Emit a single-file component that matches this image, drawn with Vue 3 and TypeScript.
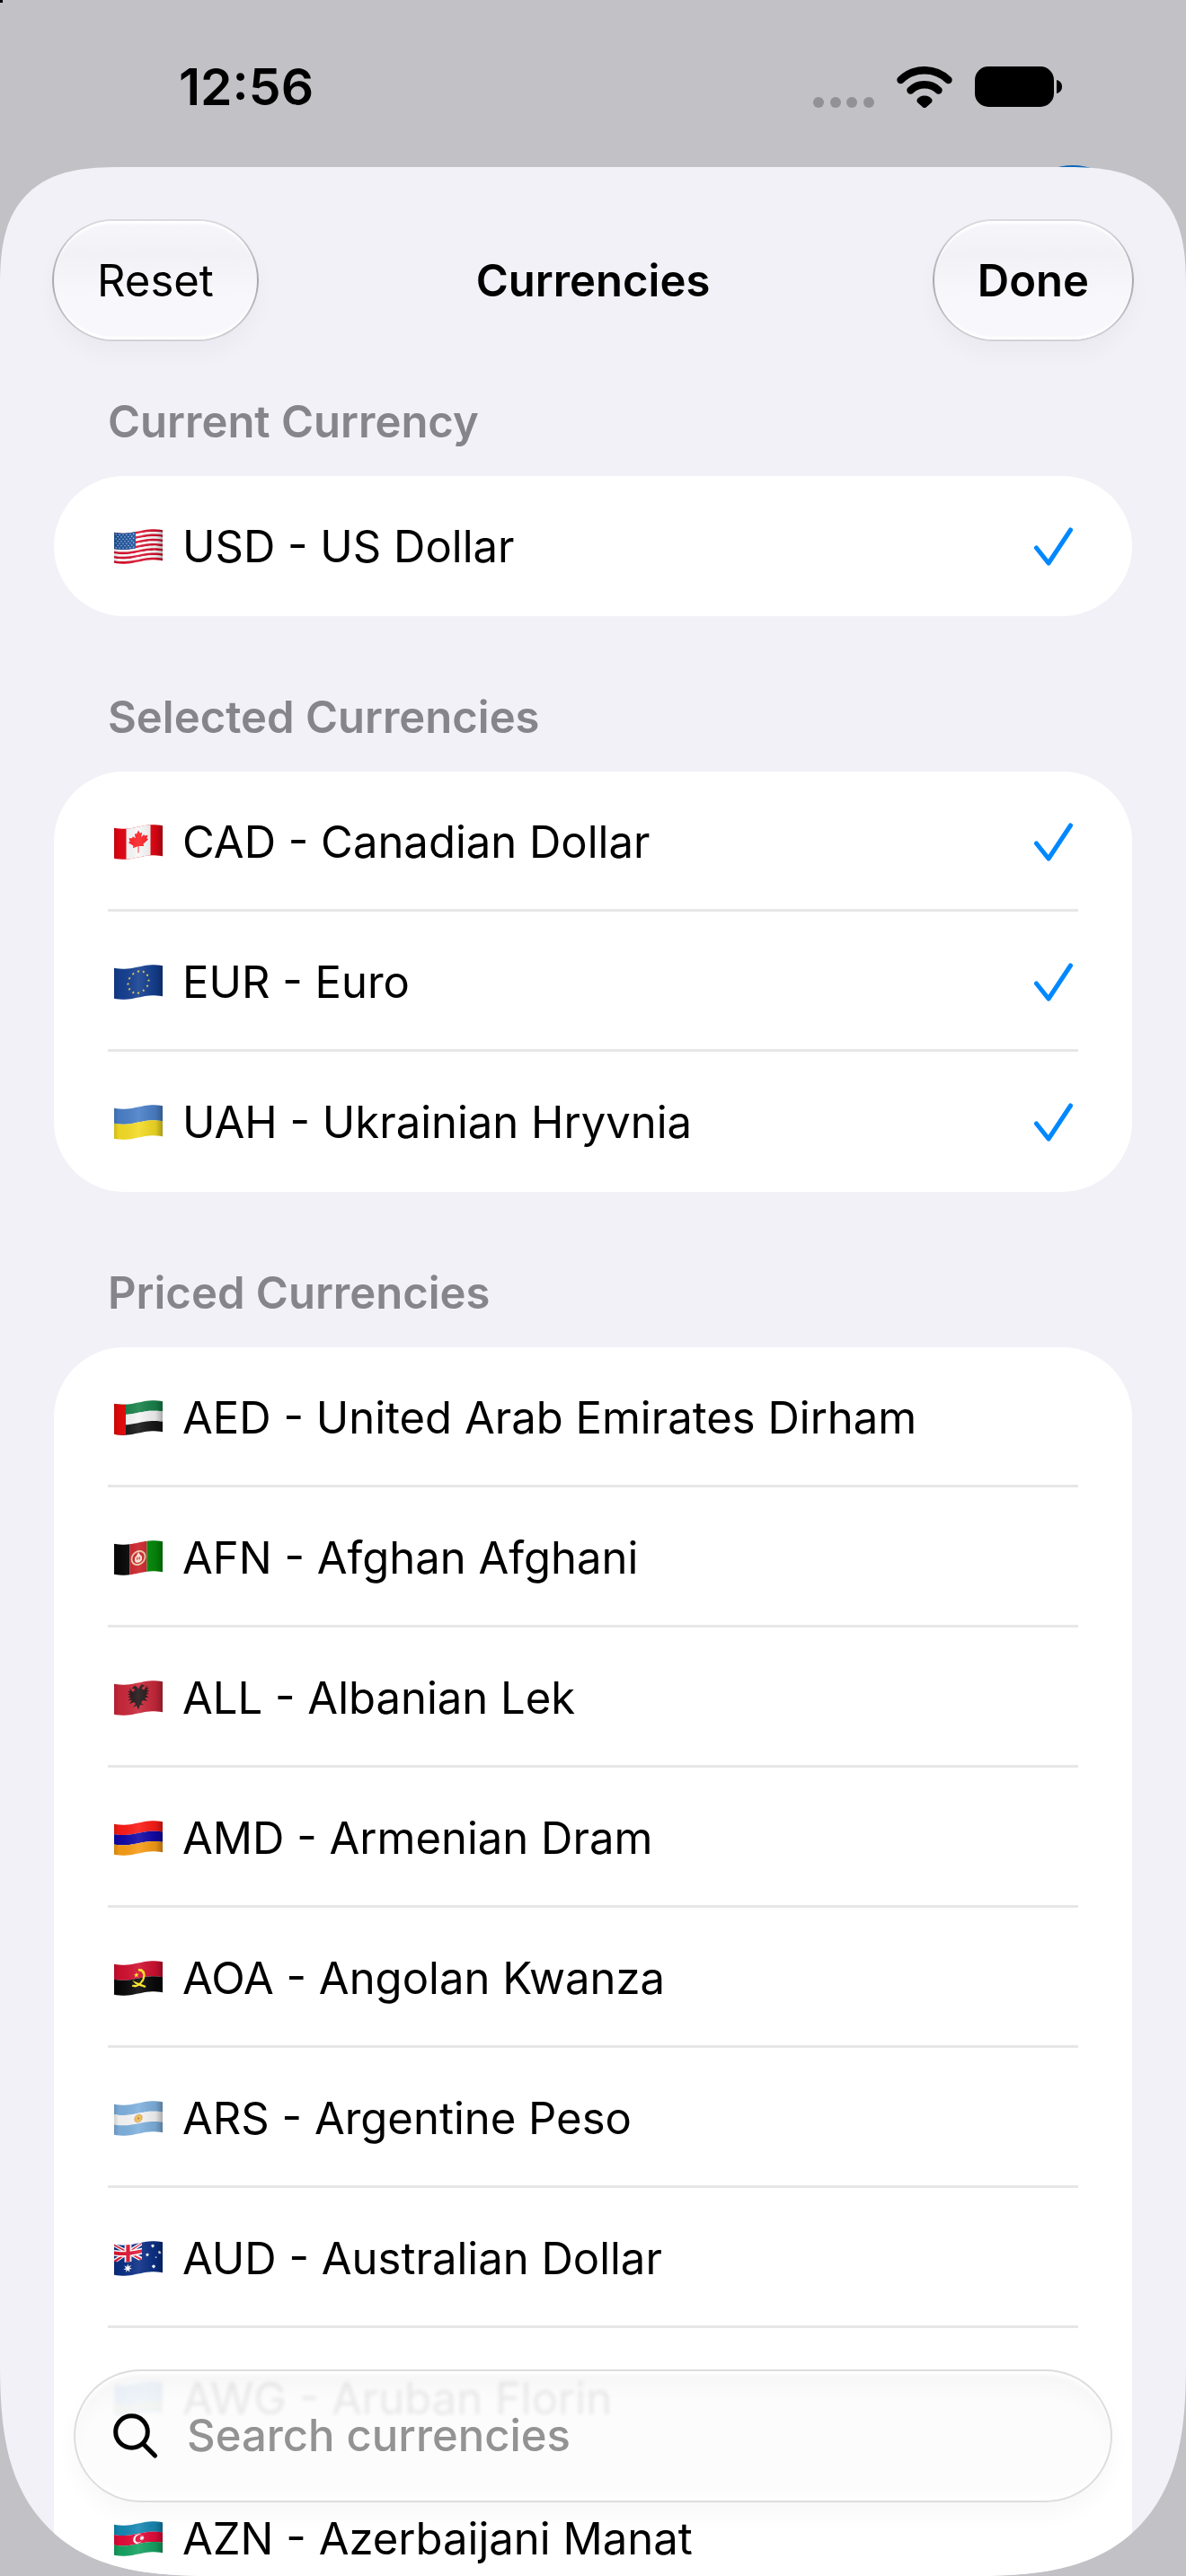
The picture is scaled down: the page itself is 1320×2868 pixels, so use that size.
<script setup lang="ts">
import { ref } from 'vue'

type Point = [number, number]
interface Shape {
  fill: string
  d: string
}
interface Currency {
  code: string
  name: string
  flag: string
  selected?: boolean
}
interface Section {
  title: string
  items: Currency[]
}

/* Flags are drawn flat on a 54 x 34 field, then every point is shifted along this wave. */
const wave = (x: number): number => 2.5 + 2.2 * Math.cos((2 * Math.PI * (x - 10)) / 68)
const poly = (fill: string, pts: Point[]): Shape => ({
  fill,
  d: 'M' + pts.map(([x, y]) => `${x.toFixed(2)} ${(y + wave(x)).toFixed(2)}`).join('L') + 'Z',
})
const rect = (fill: string, x0: number, x1: number, y0: number, y1: number): Shape => {
  const steps = 18
  const top: Point[] = []
  const bottom: Point[] = []
  for (let i = 0; i <= steps; i++) {
    const x = x0 + ((x1 - x0) * i) / steps
    top.push([x, y0])
    bottom.unshift([x, y1])
  }
  return poly(fill, [...top, ...bottom])
}
const disc = (fill: string, cx: number, cy: number, r: number): Shape => {
  const pts: Point[] = []
  for (let i = 0; i < 20; i++) {
    const a = (i * Math.PI) / 10
    pts.push([cx + r * Math.cos(a), cy + r * Math.sin(a)])
  }
  return poly(fill, pts)
}
const star = (fill: string, cx: number, cy: number, r: number, n = 5, inner = 0.42): Shape => {
  const pts: Point[] = []
  for (let i = 0; i < n * 2; i++) {
    const a = (i * Math.PI) / n - Math.PI / 2
    const q = i % 2 ? r * inner : r
    pts.push([cx + q * Math.cos(a), cy + q * Math.sin(a)])
  }
  return poly(fill, pts)
}
const bands = (...fills: string[]): Shape[] =>
  fills.map((f, i) => rect(f, 0, 54, (34 * i) / fills.length, (34 * (i + 1)) / fills.length))
const mirror = (half: Point[], axis: number): Point[] => [
  ...half,
  ...half.slice().reverse().map(([x, y]): Point => [2 * axis - x, y]),
]

const usStars: Shape[] = []
for (let r = 0; r < 7; r++) {
  for (let c = 0; c < 6 - (r % 2); c++) {
    usStars.push(disc('#dfe6f2', 2.2 + c * 3.9 + (r % 2) * 1.95, 1.8 + r * 2.45, 0.62))
  }
}

const flags: Record<string, Shape[]> = {
  us: [
    ...bands(...Array.from({ length: 13 }, (_, i) => (i % 2 ? '#ffffff' : '#d8122f'))),
    rect('#2257a0', 0, 24, 0, 18.3),
    ...usStars,
  ],
  ca: [
    rect('#e30613', 0, 54, 0, 34),
    rect('#f7f7f7', 13.5, 40.5, 0, 34),
    poly('#fb2125', mirror([
      [27, 4], [25, 7.6], [22.8, 6.8], [23.8, 12.2], [20.8, 9.6], [20, 11.4], [16.5, 11],
      [17.6, 14.6], [16, 15.8], [21.6, 20.2], [20.8, 22.6], [26.5, 21.6], [26.5, 29],
    ], 27)),
  ],
  eu: [
    rect('#143f91', 0, 54, 0, 34),
    ...Array.from({ length: 12 }, (_, i) => {
      const a = (i * Math.PI) / 6
      return star('#f5d94a', 27 + 11.5 * Math.sin(a), 17 - 12 * Math.cos(a), 1.7)
    }),
  ],
  ua: bands('#4a80c8', '#f4dc25'),
  ae: [...bands('#18824a', '#f5f5f5', '#161616'), rect('#e60a0a', 0, 13, 0, 34)],
  af: [
    rect('#090909', 0, 17.5, 0, 34),
    rect('#c92027', 17.5, 36.5, 0, 34),
    rect('#058a09', 36.5, 54, 0, 34),
    disc('#efc9a5', 27, 17, 8.4),
    disc('#c92027', 27, 17, 6.6),
    poly('#f6e3d2', [[23, 20], [23, 16], [25, 14], [27, 10.5], [29, 14], [31, 16], [31, 20], [29, 22], [25, 22]]),
    rect('#c92027', 25.2, 28.8, 16, 19),
    rect('#f6e3d2', 26.4, 27.6, 15, 20),
  ],
  al: [
    rect('#c9283a', 0, 54, 0, 34),
    poly('#221517', mirror([
      [27, 7], [25.5, 4.5], [23, 2.5], [19.5, 5], [22.5, 5.5], [23, 8], [20.5, 9], [17, 4],
      [18, 8], [15, 7], [18, 10.5], [14.7, 10.5], [18.3, 13], [15, 14], [19, 15.3],
      [15.5, 17.8], [20, 18], [17, 22], [22, 20.5], [24, 23], [21, 26], [25, 25], [27, 30],
    ], 27)),
  ],
  am: bands('#fb1b16', '#1208a8', '#f79c16'),
  ao: [
    ...bands('#d01030', '#090909'),
    star('#ffe61e', 24.8, 13, 3),
    poly('#ffe61e', [
      [27, 6.5], [31, 7.6], [34, 11], [34.7, 16], [33, 21], [29, 25], [24, 26.5], [19.8, 25],
      [20.6, 23], [25, 24], [29, 22], [31.6, 18.5], [32.3, 14], [30.5, 10.4], [27, 8.8],
    ]),
    poly('#ffe61e', [[20, 18], [25, 21], [35.5, 27], [34.5, 29], [28, 25.4], [24, 22.8]]),
  ],
  ar: [
    ...bands('#7fb1de', '#f7f7f7', '#7fb1de'),
    star('#d9a55f', 27, 17, 5.4, 16, 0.75),
    disc('#f0bd4c', 27, 17, 3.4),
    disc('#b7793d', 27, 17, 1.2),
  ],
  au: [
    rect('#0b2f86', 0, 54, 0, 34),
    poly('#ffffff', [[0, 0], [3.5, 0], [31, 16], [31, 19], [27.5, 19], [0, 3]]),
    poly('#ffffff', [[31, 0], [27.5, 0], [0, 16], [0, 19], [3.5, 19], [31, 3]]),
    poly('#e31837', [[0, 0], [31, 18], [31, 19], [29, 19], [0, 1.4]]),
    poly('#e31837', [[31, 0], [0, 18], [0, 19], [2, 19], [31, 1.4]]),
    rect('#ffffff', 11.6, 19.4, 0, 19),
    rect('#ffffff', 0, 31, 6, 13),
    rect('#e31837', 13.4, 17.6, 0, 19),
    rect('#e31837', 0, 31, 7.6, 11.4),
    star('#ffffff', 15.2, 26, 5, 7),
    star('#ffffff', 43, 5.2, 2.2, 7, 0.6),
    star('#ffffff', 37, 14.6, 2.1, 7, 0.6),
    star('#ffffff', 50.6, 12, 2, 7, 0.6),
    star('#ffffff', 46.6, 17.8, 1.3),
    star('#ffffff', 44, 28, 2.3, 7, 0.6),
  ],
  aw: [rect('#4189dd', 0, 54, 0, 34), rect('#f9d616', 0, 54, 23, 25), rect('#f9d616', 0, 54, 28, 30)],
  az: [
    ...bands('#1688b4', '#e40b38', '#16a362'),
    disc('#ffffff', 26.4, 17, 5.2),
    disc('#e40b38', 27.8, 17, 4.2),
    star('#ffffff', 31, 17, 3, 8, 0.5),
  ],
}
const outline = rect('url(#fold)', 0, 54, 0, 34)

const sections = ref<Section[]>([
  { title: 'Current Currency', items: [{ code: 'USD', name: 'US Dollar', flag: 'us', selected: true }] },
  {
    title: 'Selected Currencies',
    items: [
      { code: 'CAD', name: 'Canadian Dollar', flag: 'ca', selected: true },
      { code: 'EUR', name: 'Euro', flag: 'eu', selected: true },
      { code: 'UAH', name: 'Ukrainian Hryvnia', flag: 'ua', selected: true },
    ],
  },
  {
    title: 'Priced Currencies',
    items: [
      { code: 'AED', name: 'United Arab Emirates Dirham', flag: 'ae' },
      { code: 'AFN', name: 'Afghan Afghani', flag: 'af' },
      { code: 'ALL', name: 'Albanian Lek', flag: 'al' },
      { code: 'AMD', name: 'Armenian Dram', flag: 'am' },
      { code: 'AOA', name: 'Angolan Kwanza', flag: 'ao' },
      { code: 'ARS', name: 'Argentine Peso', flag: 'ar' },
      { code: 'AUD', name: 'Australian Dollar', flag: 'au' },
      { code: 'AWG', name: 'Aruban Florin', flag: 'aw' },
      { code: 'AZN', name: 'Azerbaijani Manat', flag: 'az' },
    ],
  },
])
const query = ref('')
</script>

<template>
  <div class="screen">
    <svg class="defs" width="0" height="0" aria-hidden="true">
      <defs>
        <linearGradient id="fold" x1="0" y1="0" x2="1" y2="0">
          <stop offset="0" stop-color="#000" stop-opacity="0.16" />
          <stop offset="0.1" stop-color="#000" stop-opacity="0.04" />
          <stop offset="0.5" stop-color="#fff" stop-opacity="0.1" />
          <stop offset="0.85" stop-color="#000" stop-opacity="0.08" />
          <stop offset="1" stop-color="#000" stop-opacity="0.3" />
        </linearGradient>
      </defs>
    </svg>
    <span class="speck"></span>
    <span class="avatar"></span>

    <header class="status">
      <time class="clock">12:56</time>
      <div class="indicators">
        <svg class="cell" viewBox="0 0 68 12" aria-hidden="true">
          <circle cx="6" cy="6" r="6" /><circle cx="25" cy="6" r="6" />
          <circle cx="43" cy="6" r="6" /><circle cx="62" cy="6" r="6" />
        </svg>
        <svg class="wifi" viewBox="0 0 62 46" aria-hidden="true">
          <path d="M4.500 15.000A38 38 0 0 1 57.500 15.000" fill="none" stroke="#000" stroke-width="8.500" stroke-linecap="round" />
          <path d="M15.500 26.500A22.500 22.500 0 0 1 46.500 26.500" fill="none" stroke="#000" stroke-width="8.500" stroke-linecap="round" />
          <path d="M31 32.500C35 32.500 38 34.500 39.200 36.500C40 38 39.500 39.400 38.400 40.500L32.700 45.600Q31 47 29.300 45.600L23.600 40.500C22.500 39.400 22 38 22.800 36.500C24 34.500 27 32.500 31 32.500Z" />
        </svg>
        <svg class="battery" viewBox="0 0 98 46" aria-hidden="true">
          <rect x="0" y="0" width="88" height="45" rx="15" />
          <path d="M91 15C95 16 97 19 97 22.500S95 29 91 30Z" />
        </svg>
      </div>
    </header>

    <main class="sheet">
      <nav class="bar">
        <button type="button" class="glass">Reset</button>
        <h1 class="title">Currencies</h1>
        <button type="button" class="glass strong">Done</button>
      </nav>

      <div class="list">
        <section v-for="section in sections" :key="section.title" class="section">
          <h2 class="heading">{{ section.title }}</h2>
          <ul class="card">
            <li v-for="item in section.items" :key="item.code" class="item">
              <button type="button" class="row">
                <svg class="flag" viewBox="0 0 54 39" aria-hidden="true">
                  <path v-for="(shape, i) in flags[item.flag]" :key="i" :d="shape.d" :fill="shape.fill" />
                  <path :d="outline.d" :fill="outline.fill" />
                </svg>
                <span class="label">{{ item.code }} - {{ item.name }}</span>
                <svg v-if="item.selected" class="check" viewBox="0 0 43 43" aria-label="Selected">
                  <path d="M2.500 23L16 40L40.500 3" />
                </svg>
              </button>
            </li>
          </ul>
        </section>
      </div>

      <label class="search">
        <svg class="lens" viewBox="0 0 50 50" aria-hidden="true">
          <circle cx="20.500" cy="20.500" r="17.800" />
          <path d="M33.500 34L46.500 47" />
        </svg>
        <input v-model="query" class="field" type="search" placeholder="Search currencies" aria-label="Search currencies" />
      </label>
    </main>
  </div>
</template>

<style>
html,
body {
  background: #c2c1c6;
}
</style>

<style scoped>
.screen {
  position: relative;
  display: flex;
  flex-direction: column;
  height: 100vh;
  overflow: hidden;
  background: #c2c1c6;
  color: #000;
  font-family: Inter, 'Liberation Sans', sans-serif;
  font-size: 49px;
  line-height: 60px;
}
.defs {
  position: absolute;
}
.speck {
  position: absolute;
  top: 0;
  left: 0;
  width: 3px;
  height: 3px;
  background: #000;
}
.avatar {
  position: absolute;
  top: 184px;
  right: 60px;
  width: 132px;
  height: 132px;
  border-radius: 50%;
  background: #0a67b8;
}
.status {
  flex: none;
  display: flex;
  justify-content: space-between;
  align-items: center;
  height: 186px;
  padding: 0 137px 0 199px;
  box-sizing: border-box;
}
.clock {
  font-size: 57px;
  font-weight: 600;
  padding-top: 8px;
}
.indicators {
  display: flex;
  align-items: flex-end;
  gap: 25px;
  padding-top: 8px;
}
.cell {
  width: 68px;
  height: 12px;
  fill: #929294;
}
.wifi {
  width: 62px;
  height: 46px;
}
.battery {
  width: 98px;
  height: 46px;
}
.sheet {
  position: relative;
  flex: 1;
  min-height: 0;
  display: flex;
  flex-direction: column;
  overflow: hidden;
  background: #f2f1f7;
  border-radius: 112px 112px 186px 186px;
}
@supports (corner-shape: squircle) {
  .sheet {
    border-radius: 135px 135px 240px 240px;
    corner-shape: superellipse(1.45);
  }
}
.bar {
  flex: none;
  display: grid;
  grid-template-columns: 1fr auto 1fr;
  align-items: center;
  padding: 58px 58px 0;
}
.title {
  margin: 0;
  padding-top: 2px;
  font-size: 49px;
  font-weight: 600;
  line-height: 60px;
}
.glass {
  justify-self: start;
  height: 136px;
  padding: 2px 48px 0;
  border: 2px solid transparent;
  border-radius: 68px;
  background:
    linear-gradient(#f7f6fb, #f2f1f6 28%, #f8f7fc 65%, #f8f7fc) padding-box,
    linear-gradient(#dcdbe1, #a9a8ae 50%, #d2d1d7) border-box;
  box-shadow:
    inset 0 5px 3px -2px #fff,
    inset 0 -5px 3px -2px #fff,
    0 14px 24px rgba(0, 0, 0, 0.03);
  color: #000;
  font: inherit;
}
.strong {
  justify-self: end;
  font-weight: 600;
}
.list {
  flex: 1;
  min-height: 0;
  overflow-y: auto;
  scrollbar-width: none;
  padding: 60px 60px 0;
}
.section + .section {
  margin-top: 83px;
}
.heading {
  margin: 0 60px 30px;
  color: #85858b;
  font-size: 49px;
  font-weight: 600;
  line-height: 60px;
}
.card {
  margin: 0;
  padding: 0;
  list-style: none;
  background: #fff;
  border-radius: 78px;
}
.item {
  margin: 0 60px;
  border-bottom: 3px solid #e7e7e7;
}
.item:last-child {
  border-color: transparent;
}
.row {
  display: flex;
  align-items: center;
  gap: 22px;
  width: 100%;
  height: 153px;
  padding: 4px 6px 0 7px;
  border: 0;
  background: none;
  color: #000;
  font: inherit;
  text-align: left;
}
.flag {
  flex: none;
  width: 54px;
  height: 39px;
}
.label {
  flex: 1;
  white-space: nowrap;
}
.check {
  flex: none;
  width: 43px;
  height: 43px;
  fill: none;
  stroke: #08f;
  stroke-width: 5;
  stroke-linecap: round;
  stroke-linejoin: round;
}
.search {
  position: absolute;
  left: 82px;
  right: 82px;
  bottom: 82px;
  display: flex;
  align-items: center;
  gap: 32px;
  height: 148px;
  padding: 0 42px;
  box-sizing: border-box;
  border: 2px solid rgba(0, 0, 0, 0.12);
  border-radius: 74px;
  background: rgba(252, 252, 252, 0.92);
  backdrop-filter: blur(2px);
  box-shadow:
    inset 0 6px 4px -2px #fff,
    inset 0 -6px 4px -2px #fff,
    inset 0 24px 30px -14px rgba(0, 0, 0, 0.04),
    0 14px 24px rgba(0, 0, 0, 0.03);
}
.lens {
  flex: none;
  width: 50px;
  height: 50px;
  fill: none;
  stroke: #000;
  stroke-width: 5;
  stroke-linecap: round;
}
.field {
  flex: 1;
  min-width: 0;
  padding: 0;
  border: 0;
  outline: 0;
  background: none;
  color: #000;
  font: inherit;
  font-weight: 500;
  appearance: none;
}
.field::placeholder {
  color: #939393;
  opacity: 1;
}
</style>
